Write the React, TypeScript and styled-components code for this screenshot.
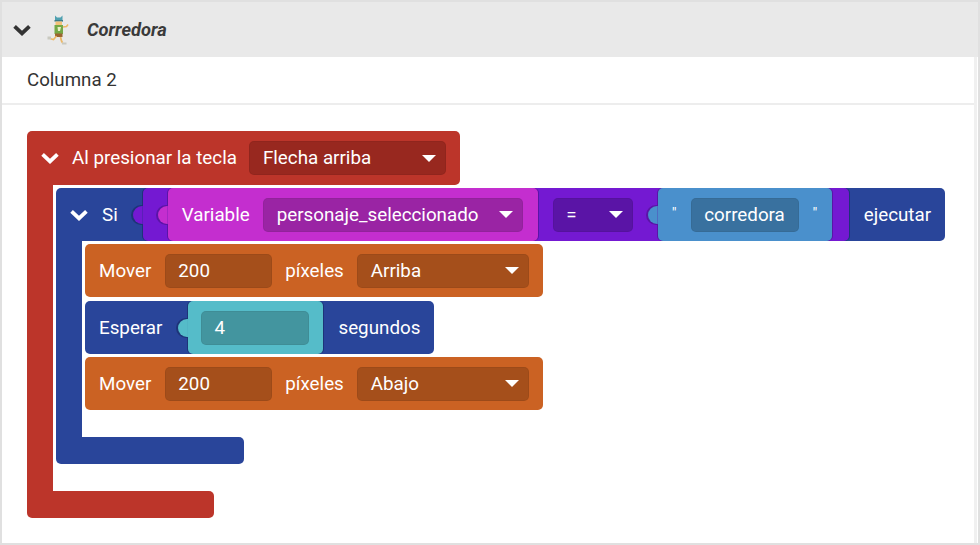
import React from "react";
import styled, { createGlobalStyle } from "styled-components";

const Global = createGlobalStyle`
  html, body { margin: 0; padding: 0; background: #fff; }
  body { font-family: Roboto, "Liberation Sans", sans-serif; }
`;

const Frame = styled.div`
  width: 980px; height: 545px; box-sizing: border-box;
  border: 2px solid #e0e0e0; background: #fff; overflow: hidden;
`;
const Header = styled.div`
  height: 55px; background: #e9e9e9; display: flex; align-items: center;
  padding-left: 11px; gap: 16px; color: #333;
`;
const Title = styled.span`
  font-size: 18.3px; font-weight: 700; font-style: italic; color: #3a3a3a; margin-left: 2px;
`;
const Main = styled.div`
  height: 486px; margin-right: 1px; box-sizing: border-box; border-right: 3px solid #f0f0f0;
`;
const SubHeader = styled.div`
  height: 48px; box-sizing: border-box; border-bottom: 2px solid #ededed;
  padding: 0 0 0 25px; display: flex; align-items: center;
  font-size: 18.7px; color: #333;
`;
const Canvas = styled.div`
  padding: 26px 0 0 25px;
`;

type Tone = { base: string; dark: string };
const RED = { base: "#bc352a", dark: "#98281f" };
const BLUE = { base: "#29459a", dark: "#1d3478" };
const ORANGE = { base: "#cb6223", dark: "#a54f1b" };
const MAGENTA = { base: "#c42ecf", dark: "#9a24a4" };
const PURPLE = { base: "#7419d2", dark: "#5a14a6" };
const SKY = { base: "#4a90cc", dark: "#39719f" };
const TEAL = { base: "#55bcc9", dark: "#43959f" };

const Stack = styled.div`
  display: flex; flex-direction: column; width: fit-content;
`;
const Head = styled.div<{ $tone: Tone; $h: number; $w: number; $pl?: number; $arm?: boolean; $mt?: number }>`
  width: ${p => p.$w}px; height: ${p => p.$h}px; box-sizing: border-box; flex: none;
  margin-top: ${p => p.$mt ?? 0}px;
  background: ${p => p.$tone.base}; border-radius: ${p => (p.$arm ? "5px 5px 5px 0" : "5px")};
  display: flex; align-items: center; color: #fff;
  padding-left: ${p => p.$pl ?? 14}px; font-size: 18.8px; white-space: nowrap;
`;
const ControlHead = styled(Head)`
  align-items: stretch;
`;
const Inner = styled.div`
  display: flex;
`;
const Arm = styled.div<{ $tone: Tone }>`
  width: 26px; background: ${p => p.$tone.base}; flex: none;
`;
const Body = styled.div<{ $pb: number }>`
  display: flex; flex-direction: column; gap: 3px;
  padding: 3px 0 ${p => p.$pb}px 3px;
`;
const Foot = styled.div<{ $tone: Tone; $w: number }>`
  width: ${p => p.$w}px; height: 27px; background: ${p => p.$tone.base};
  border-radius: 0 5px 5px 5px;
`;
const Chevron = styled.svg`
  flex: none; width: 18px; height: 12px; align-self: center;
`;
const Label = styled.span<{ $ml?: number }>`
  margin-left: ${p => p.$ml ?? 0}px; align-self: center;
`;
const Field = styled.div<{ $tone: Tone; $w: number; $ml?: number; $center?: boolean }>`
  width: ${p => p.$w}px; height: 34px; box-sizing: border-box; flex: none; align-self: center;
  margin-left: ${p => p.$ml ?? 0}px; border-radius: 5px; background: ${p => p.$tone.dark};
  box-shadow: inset 0 0 0 1px rgba(0, 0, 0, 0.05);
  display: flex; align-items: center; justify-content: ${p => (p.$center ? "center" : "space-between")};
  padding: ${p => (p.$center ? "0" : "0 10px 0 13.5px")}; color: #fff; font-size: 18.8px;
`;
const Caret = styled.span`
  width: 0; height: 0; border-left: 7px solid transparent; border-right: 7px solid transparent;
  border-top: 7px solid #fff;
`;
const Bump = styled.span<{ $color: string; $edge: string }>`
  position: absolute; left: -10px; top: 50%; width: 18px; height: 18px;
  transform: translateY(-50%); border-radius: 50%; background: ${p => p.$color};
  box-shadow: -1px 0 0 1px ${p => p.$edge};
  clip-path: inset(-3px 8px -3px -3px);
`;
const Piece = styled.div<{ $tone: Tone; $w: number; $edge: string; $ml?: number; $pl?: number }>`
  position: relative; flex: none; width: ${p => p.$w}px; align-self: stretch; box-sizing: border-box;
  margin-left: ${p => p.$ml ?? 0}px; padding-left: ${p => p.$pl ?? 0}px;
  background: ${p => p.$tone.base}; border-radius: 5px;
  box-shadow: -1px 0 0 ${p => p.$edge}, 1px 0 0 ${p => p.$edge};
  display: flex; align-items: center; color: #fff; font-size: 18.8px;
`;
const Quote = styled.span<{ $ml: number }>`
  margin-left: ${p => p.$ml}px; font-size: 15px; align-self: flex-start; margin-top: 16px; color: #fff;
`;

const Down = () => (
  <Chevron viewBox="0 0 18 12">
    <path d="M1.6 2.4 L9 9.4 L16.4 2.4" fill="none" stroke="currentColor" strokeWidth="3.8" />
  </Chevron>
);

const Runner = () => (
  <svg width="22" height="32" viewBox="0 0 22 32" style={{ flex: "none" }}>
    <path d="M8 1.5l2 2h3.5l2-2v5H8z" fill="#4fa0b0" />
    <rect x="7.5" y="6" width="8.5" height="1.6" fill="#3c7c88" />
    <rect x="8.5" y="7.5" width="6.5" height="3.5" fill="#f3c27a" />
    <rect x="7.5" y="11" width="8.5" height="9" fill="#74a946" />
    <path d="M10.5 13h3.5l-1 4h-2z" fill="#e8efc6" />
    <rect x="8" y="19.5" width="7.5" height="3.5" fill="#9a6430" />
    <path d="M16 13l3.5-.5 1.5-2" fill="none" stroke="#ecb968" strokeWidth="1.6" />
    <path d="M9.5 22l-3 3.5-3-.8" fill="none" stroke="#ecb968" strokeWidth="1.6" />
    <path d="M13.5 23l1 4 1 1.8" fill="none" stroke="#ecb968" strokeWidth="1.8" />
    <rect x="0.5" y="22.5" width="3.5" height="3" fill="#c9c9c0" />
    <rect x="15" y="28.5" width="4.5" height="2" fill="#c9c9c0" />
  </svg>
);

const ActionBlock = ({ label }: { label: string }) => (
  <Head $tone={ORANGE} $h={53} $w={458}>
    <Label>Mover</Label>
    <Field $tone={ORANGE} $w={107} $ml={13.5}>200</Field>
    <Label $ml={13.5}>píxeles</Label>
    <Field $tone={ORANGE} $w={172} $ml={13.5}>{label}<Caret /></Field>
  </Head>
);

const App = () => (
  <>
    <Global />
    <Frame>
      <Header>
        <Down />
        <Runner />
        <Title>Corredora</Title>
      </Header>
      <Main>
        <SubHeader>Columna 2</SubHeader>
        <Canvas>
          <Stack>
            <Head $tone={RED} $h={54} $w={433} $arm>
              <Down />
              <Label $ml={13}>Al presionar la tecla</Label>
              <Field $tone={RED} $w={197} $ml={12.5}>Flecha arriba<Caret /></Field>
            </Head>
            <Inner>
              <Arm $tone={RED} />
              <Body $pb={27}>
                <Stack>
                  <ControlHead $tone={BLUE} $h={53} $w={889} $arm>
                    <Down />
                    <Label $ml={14}>Si</Label>
                    <Piece $tone={PURPLE} $w={706} $edge={BLUE.dark} $ml={25} $pl={25}>
                      <Bump $color={PURPLE.base} $edge={BLUE.dark} />
                      <Piece $tone={MAGENTA} $w={370} $edge={PURPLE.dark} $pl={14}>
                        <Bump $color={MAGENTA.base} $edge={PURPLE.dark} />
                        Variable
                        <Field $tone={MAGENTA} $w={260} $ml={13.5}>personaje_seleccionado<Caret /></Field>
                      </Piece>
                      <Field $tone={PURPLE} $w={80} $ml={15}>=<Caret /></Field>
                      <Piece $tone={SKY} $w={174} $edge={PURPLE.dark} $ml={25}>
                        <Bump $color={SKY.base} $edge={PURPLE.dark} />
                        <Quote $ml={14}>"</Quote>
                        <Field $tone={SKY} $w={108} $ml={14} $center>corredora</Field>
                        <Quote $ml={14}>"</Quote>
                      </Piece>
                    </Piece>
                    <Label $ml={15}>ejecutar</Label>
                  </ControlHead>
                  <Inner>
                    <Arm $tone={BLUE} />
                    <Body $pb={27}>
                      <ActionBlock label="Arriba" />
                      <Head $tone={BLUE} $h={53} $w={349} $mt={1}>
                        <Label>Esperar</Label>
                        <Piece $tone={TEAL} $w={135} $edge={BLUE.dark} $ml={25.5} $pl={13}>
                          <Bump $color={TEAL.base} $edge={BLUE.dark} />
                          <Field $tone={TEAL} $w={108}>4</Field>
                        </Piece>
                        <Label $ml={15.5}>segundos</Label>
                      </Head>
                      <ActionBlock label="Abajo" />
                    </Body>
                  </Inner>
                  <Foot $tone={BLUE} $w={188} />
                </Stack>
              </Body>
            </Inner>
            <Foot $tone={RED} $w={187} />
          </Stack>
        </Canvas>
      </Main>
    </Frame>
  </>
);

export default App;
